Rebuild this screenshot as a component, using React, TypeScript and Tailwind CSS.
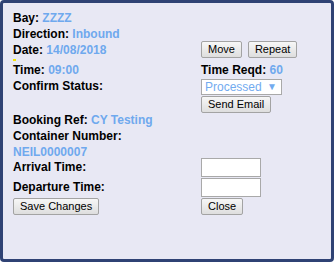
import React from 'react';

const btn =
  "h-[17px] px-[6px] border border-[#a3a3a3] rounded-[2px] bg-gradient-to-b from-[#f7f7f7] to-[#dedede] text-[11px] font-normal leading-none text-black";

const Field = ({ label, value }: { label: string; value?: string }) => (
  <span className="font-bold whitespace-nowrap">
    {label}
    {value && <span className="text-[#6fa9ee]"> {value}</span>}
  </span>
);

const Row = ({
  h,
  left,
  right,
  className = '',
}: {
  h: string;
  left?: React.ReactNode;
  right?: React.ReactNode;
  className?: string;
}) => (
  <div className={`flex ${h} ${className}`}>
    <div className="w-[188px] shrink-0">{left}</div>
    <div className="flex gap-[6px] items-start">{right}</div>
  </div>
);

export default function App() {
  return (
    <div className="w-[334px] h-[262px] bg-[#e8e8f4] border-[3px] border-[#2f4274] rounded-[4px] pl-[10px] pt-[7px] font-['Liberation_Sans',Arial,sans-serif] text-[12px] leading-4 text-black">
      <Row h="h-4" left={<Field label="Bay:" value="ZZZZ" />} />
      <Row h="h-4" left={<Field label="Direction:" value="Inbound" />} />
      <Row
        h="h-4"
        left={<Field label="Date:" value="14/08/2018" />}
        right={
          <div className="flex gap-[6px] -mt-[1px]">
            <button className={btn}>Move</button>
            <button className={btn}>Repeat</button>
          </div>
        }
      />
      {/* stray marker */}
      <div className="h-[4px] pt-[1px]">
        <div className="w-[3px] h-[2px] bg-[#f4e400]" />
      </div>
      <Row
        h="h-4"
        left={<Field label="Time:" value="09:00" />}
        right={<Field label="Time Reqd:" value="60" />}
      />
      <Row
        h="h-4"
        left={<Field label="Confirm Status:" />}
        right={
          <div className="mt-[1px] w-[81px] h-[16px] bg-white border border-[#a9a9a9] flex items-center justify-between pl-[3px] pr-[4px] text-[12px] text-[#72abef]">
            <span>Processed</span>
            <span className="text-[10px]">▼</span>
          </div>
        }
      />
      <Row
        h="h-[18px]"
        right={<button className={`${btn} mt-[2px]`}>Send Email</button>}
      />
      <Row h="h-4" left={<Field label="Booking Ref:" value="CY Testing" />} />
      <Row h="h-4" left={<Field label="Container Number:" />} />
      <Row
        h="h-[13px]"
        left={<span className="font-bold text-[#6fa9ee] leading-[13px]">NEIL0000007</span>}
      />
      <Row
        h="h-[20px]"
        className="items-center"
        left={<Field label="Arrival Time:" />}
        right={<div className="w-[60px] h-[19px] bg-white border border-[#a9a9a9]" />}
      />
      <Row
        h="h-[20px]"
        className="items-center"
        left={<Field label="Departure Time:" />}
        right={<div className="w-[60px] h-[19px] bg-white border border-[#a9a9a9]" />}
      />
      <Row
        h="h-[17px] mt-[1px]"
        left={<button className={btn}>Save Changes</button>}
        right={<button className={btn}>Close</button>}
      />
    </div>
  );
}
